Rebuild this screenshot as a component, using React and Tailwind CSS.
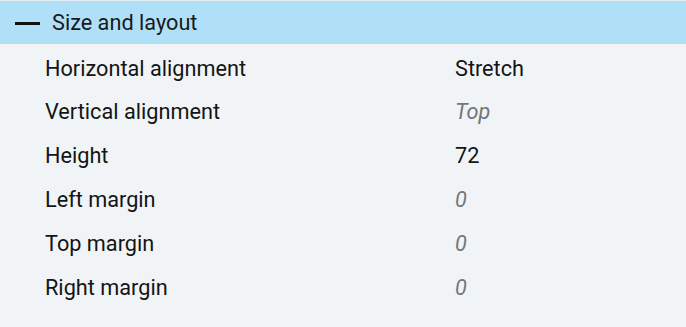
import React from 'react';

const rows = [
  { label: 'Horizontal alignment', value: 'Stretch', set: true },
  { label: 'Vertical alignment', value: 'Top', set: false },
  { label: 'Height', value: '72', set: true },
  { label: 'Left margin', value: '0', set: false },
  { label: 'Top margin', value: '0', set: false },
  { label: 'Right margin', value: '0', set: false },
];

export default function App() {
  return (
    <div className="w-[686px] h-[327px] bg-[#f0f4f7] font-['Roboto',sans-serif] text-[21.7px] overflow-hidden">
      <div className="border-t border-[#e3eef5] bg-[#b0e0f7] h-[44px] pt-[2px] flex items-center">
        <div className="w-[25px] h-[3px] bg-[#111] ml-[15px] mr-[12px]"></div>
        <span className="text-[#1a1a1a]">Size and layout</span>
      </div>
      <div className="pt-[3px]">
        {rows.map((r) => (
          <div key={r.label} className="h-[43.8px] flex items-center">
            <span className="w-[455px] pl-[45px] text-[#141414]">{r.label}</span>
            <span className={r.set ? 'text-[#141414]' : 'italic text-[#757575]'}>{r.value}</span>
          </div>
        ))}
      </div>
    </div>
  );
}
